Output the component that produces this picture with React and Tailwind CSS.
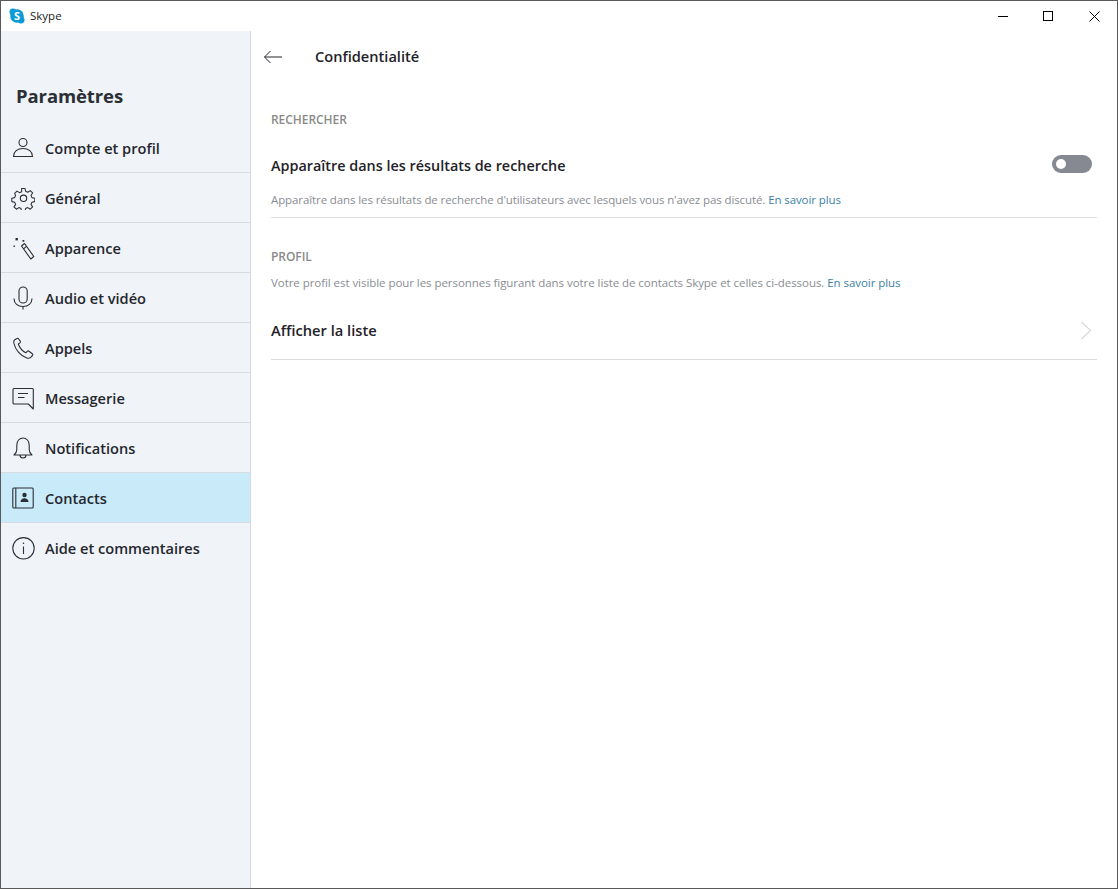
const Icon = ({ children }) => (
  <svg width="24" height="24" viewBox="0 0 24 24" fill="none" stroke="#2b2f36" strokeWidth="1.1" strokeLinejoin="round" className="shrink-0">
    {children}
  </svg>
);

const items = [
  {
    label: 'Compte et profil',
    icon: (
      <>
        <circle cx="12" cy="6.500" r="4" />
        <path d="M2.500 20.500c0-5 4-8 9.500-8s9.500 3 9.500 8z" />
      </>
    ),
  },
  {
    label: 'Général',
    icon: (
      <>
        <circle cx="12.500" cy="12.300" r="3.200" />
        <path d="M10.200 1.800h3.600l.6 3 2.300 1 2.600-1.700 2.500 2.500-1.700 2.600 1 2.300 3 .6v3.600l-3 .6-1 2.300 1.700 2.600-2.500 2.500-2.600-1.700-2.300 1-.6 3h-3.600l-.6-3-2.300-1-2.600 1.700-2.500-2.500 1.700-2.600-1-2.300-3-.6v-3.600l3-.6 1-2.300L2.900 7.100l2.500-2.500 2.600 1.700 2.300-1z" transform="translate(0.900 0.700) scale(0.95)" />
      </>
    ),
  },
  {
    label: 'Apparence',
    icon: (
      <>
        <path d="M10.500 10l3-2.500 9.300 13-3 2.500z" />
        <path d="M12.500 12.800l3-2.500" />
        <path d="M4.500 2h2.400v2.400H4.500z" fill="#2b2f36" stroke="none" />
        <path d="M2.500 9.500h1.400v1.400H2.500zM11.500 4h1.800v1.800h-1.800z" fill="#2b2f36" stroke="none" />
      </>
    ),
  },
  {
    label: 'Audio et vidéo',
    icon: (
      <>
        <rect x="8" y="1" width="8.200" height="16" rx="4.100" />
        <path d="M3 12.500c0 5 3.800 8 9 8s9-3 9-8M12 20.500v3" />
      </>
    ),
  },
  {
    label: 'Appels',
    icon: (
      <path d="M6 2.500L3.800 3.800C2.800 4.500 2.500 5.500 2.800 7c1.500 6.500 6.500 12.800 13 15 1.500.5 3 .3 3.900-.6l1.800-1.900c.5-.6.4-1.300-.2-1.800l-3.300-2.500c-.6-.4-1.200-.4-1.700.1l-1.500 1.500c-3.500-1.800-6.200-5.200-7.500-8.800l1.600-1.100c.6-.5.7-1.100.4-1.700L7.600 3c-.4-.7-1-.9-1.600-.5z" />
    ),
  },
  {
    label: 'Messagerie',
    icon: (
      <>
        <path d="M3 2.500h18.300c.6 0 1 .4 1 1v19.500l-5-5H3c-.6 0-1-.4-1-1v-13.500c0-.6.4-1 1-1z" />
        <path d="M7 7.500h10M7 11.500h6.500" />
      </>
    ),
  },
  {
    label: 'Notifications',
    icon: (
      <>
        <path d="M3 19c1.800-1.500 2.800-3 2.800-5.500V9c0-4 2.600-7 6.200-7s6.200 3 6.200 7v4.500c0 2.500 1 4 2.800 5.500z" />
        <path d="M9 19c0 2 1.300 3 3 3s3-1 3-3" />
      </>
    ),
  },
  {
    label: 'Contacts',
    active: true,
    icon: (
      <>
        <rect x="1.800" y="2" width="20.400" height="20" rx="1" />
        <path d="M4.800 2v20" />
        <circle cx="13.500" cy="9" r="2.200" fill="#2b2f36" stroke="none" />
        <path d="M9.500 16c0-2.400 1.800-3.800 4-3.800s4 1.400 4 3.800z" fill="#2b2f36" stroke="none" />
      </>
    ),
  },
  {
    label: 'Aide et commentaires',
    icon: (
      <>
        <circle cx="12.500" cy="12.300" r="10.700" />
        <path d="M12.500 10.500v7.500" />
        <circle cx="12.500" cy="7.300" r="0.800" fill="#2b2f36" stroke="none" />
      </>
    ),
  },
];

export default function App() {
  return (
    <div className="h-[889px] w-[1118px] flex flex-col overflow-hidden bg-white border border-[#595959] font-['Open_Sans','Liberation_Sans',sans-serif] text-[#24272e]">
      {/* Title bar */}
      <div className="h-[30px] shrink-0 flex items-center bg-white">
        <svg width="16" height="16" viewBox="0 0 16 16" className="ml-[8px] mt-[-1px]">
          <circle cx="8" cy="8" r="6.800" fill="#0e9ad7" />
          <rect x="0.500" y="0.500" width="7" height="7" rx="3.400" fill="#0e9ad7" />
          <rect x="8.500" y="8.500" width="7" height="7" rx="3.400" fill="#0e9ad7" />
          <text x="8" y="12" textAnchor="middle" fontSize="11" fontWeight="700" fill="#fff" fontFamily="Open Sans">S</text>
        </svg>
        <span className="ml-[5px] text-[11.500px] text-[#222]">Skype</span>
        <div className="ml-auto flex items-center pr-[17px]">
          <div className="w-[10px] h-px bg-black mr-[35px]" />
          <div className="w-[10px] h-[10px] border border-black mr-[36px]" />
          <svg width="11" height="11" viewBox="0 0 11 11" stroke="#000" strokeWidth="1">
            <path d="M.5.500l10 10M10.500.500l-10 10" />
          </svg>
        </div>
      </div>

      <div className="flex-1 flex min-h-0">
        {/* Sidebar */}
        <aside className="w-[250px] shrink-0 bg-[#f0f3f8] border-r border-[#d5d8e0] flex flex-col">
          <h1 className="mt-[51px] ml-[15px] h-[28px] leading-[28px] text-[18.500px] font-bold text-[#2b2f36] tracking-[-0.1px]">Paramètres</h1>
          <nav className="mt-[13px]">
            {items.map((item, i) => (
              <div
                key={item.label}
                className={`h-[50px] flex items-center pl-[10px] gap-[10px] border-b ${i < items.length - 1 ? 'border-[#d8dbe2]' : 'border-transparent'} ${item.active ? 'bg-[#c9eaf9]' : ''}`}
              >
                <Icon>{item.icon}</Icon>
                <span className="pt-[2px] text-[14.600px] font-semibold text-[#24272e]">{item.label}</span>
              </div>
            ))}
          </nav>
        </aside>

        {/* Content */}
        <main className="flex-1 pl-[20px] pr-[20px]">
          <div className="h-[52px] flex items-center">
            <svg width="20" height="14" viewBox="0 0 20 14" fill="none" stroke="#24272e" strokeWidth="1" className="ml-[-8px]">
              <path d="M19 7H1.500M7.500 1L1.500 7l6 6" />
            </svg>
            <span className="ml-[32px] text-[14.600px] font-semibold text-[#1f2228]">Confidentialité</span>
          </div>

          <div className="mt-[28px] text-[12px] font-semibold text-[#8a8a8a] leading-[18px] tracking-[-0.05px]">RECHERCHER</div>
          <div className="mt-[27px] flex items-center justify-between h-[20px]">
            <span className="text-[14.400px] font-semibold text-[#1f2228]">Apparaître dans les résultats de recherche</span>
            <div className="mr-[5px] mb-[4px] w-[40px] h-[18px] rounded-full bg-[#868892] flex items-center pl-[4px]">
              <div className="w-[10px] h-[10px] rounded-full bg-white" />
            </div>
          </div>
          <p className="mt-[15px] h-[18px] leading-[18px] text-[11.500px] text-[#8a8d93] tracking-[-0.1px] whitespace-nowrap">
            Apparaître dans les résultats de recherche d'utilisateurs avec lesquels vous n'avez pas discuté. <span className="text-[#3b7fa8]">En savoir plus</span>
          </p>
          <div className="mt-[8px] h-px bg-[#dcdcdc]" />

          <div className="mt-[30px] text-[12px] font-semibold text-[#8a8a8a] leading-[18px] tracking-[-0.05px]">PROFIL</div>
          <p className="mt-[8px] h-[18px] leading-[18px] text-[11.500px] text-[#8a8d93] tracking-[-0.055px] whitespace-nowrap">
            Votre profil est visible pour les personnes figurant dans votre liste de contacts Skype et celles ci-dessous. <span className="text-[#3b7fa8]">En savoir plus</span>
          </p>
          <div className="mt-[18px] h-[41px] flex items-center justify-between border-b border-[#dcdcdc] pb-[8px] box-content">
            <span className="text-[14.700px] font-semibold text-[#1f2228]">Afficher la liste</span>
            <svg width="12" height="19" viewBox="0 0 12 19" fill="none" stroke="#d6d6d6" strokeWidth="1.100" className="mr-[5px]">
              <path d="M1.500 1L10.500 9.500L1.500 18" />
            </svg>
          </div>
        </main>
      </div>
    </div>
  );
}
